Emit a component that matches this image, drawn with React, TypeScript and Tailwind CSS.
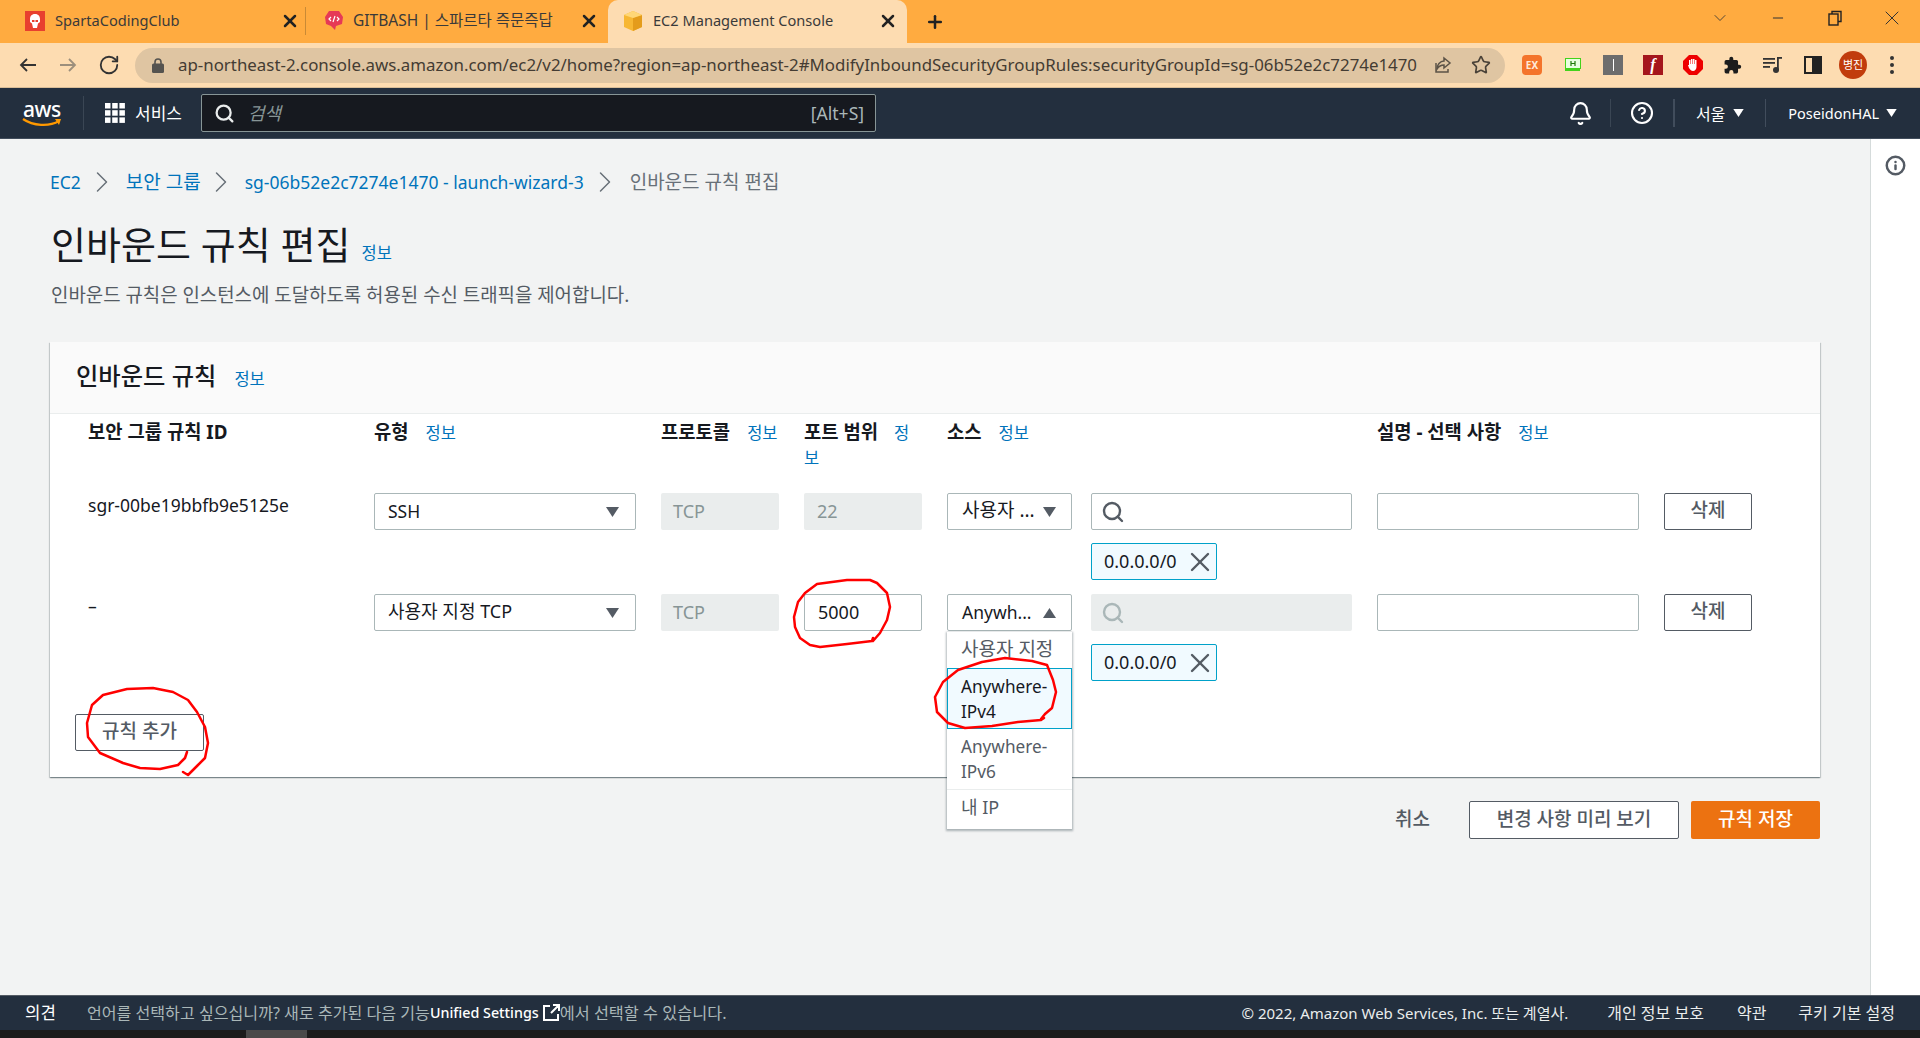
import React from "react";
import { RotateCw, Star, X, Search, Bell, CircleHelp, ChevronRight, ChevronDown, Minus, Plus, Info } from "lucide-react";

const Tri = ({ up = false, c = "#545b64", s = 10 }: { up?: boolean; c?: string; s?: number }) => (
  <svg width={s + 3} height={s} viewBox="0 0 13 10" className="shrink-0"><path d={up ? "M6.5 0 13 10H0z" : "M0 0h13L6.5 10z"} fill={c} /></svg>
);

const InfoLink = ({ className = "" }: { className?: string }) => (
  <a className={"text-[16.5px] font-normal text-[#0073bb] " + className}>정보</a>
);

const Box = ({ children, className = "" }: { children?: React.ReactNode; className?: string }) => (
  <div className={"h-[37px] flex items-center rounded-[2px] border border-[#aab7b8] bg-white text-[#16191f] " + className}>{children}</div>
);
const Disabled = ({ children, className = "" }: { children?: React.ReactNode; className?: string }) => (
  <div className={"h-[37px] flex items-center rounded-[2px] bg-[#eaeded] text-[#879596] text-[18px] " + className}>{children}</div>
);
const Token = () => (
  <div className="mt-[13px] w-[126px] h-[37px] flex items-center justify-between pl-[12px] rounded-[2px] border border-[#00a1c9] bg-[#f1faff] text-[#16191f] text-[18px]">
    <span>0.0.0.0/0</span>
    <X size={32} strokeWidth={1.8} color="#545b64" />
  </div>
);
const Del = () => (
  <button className="w-[88px] h-[37px] pb-[3px] rounded-[2px] border border-[#545b64] bg-white text-[#545b64] text-[19px] font-medium leading-[30px]">삭제</button>
);

const COLS = "grid grid-cols-[286px_287px_143px_143px_144px_286px_287px_88px]";

const Row = ({ id, type, port, source, second }: { id: string; type: React.ReactNode; port: React.ReactNode; source: React.ReactNode; second: boolean }) => (
  <div className={COLS + " h-[101px] text-[17.5px]"}>
    <div className="text-[#16191f] leading-[24px]">{id}</div>
    <div>
      <Box className="w-[262px] justify-between pl-[13px] pr-[16px]">{type}<Tri /></Box>
    </div>
    <div><Disabled className="w-[118px] pl-[12px]">TCP</Disabled></div>
    <div>{port}</div>
    <div>{source}</div>
    <div>
      {second ? (
        <Disabled className="w-[261px] pl-[10px]"><Search size={24} strokeWidth={2.4} color="#aab7b8" /></Disabled>
      ) : (
        <Box className="w-[261px] pl-[9px]"><Search size={24} strokeWidth={2.4} color="#545b64" /></Box>
      )}
      <Token />
    </div>
    <div><Box className="w-[262px]" /></div>
    <div><Del /></div>
  </div>
);

const TabClose = () => <X size={20} strokeWidth={3} color="#222" className="shrink-0" />;
const Crumb = ({ ml }: { ml: string }) => <ChevronRight size={36} strokeWidth={1} color="#687078" className={"shrink-0 " + ml} />;

export default function App() {
  return (
    <div className="relative w-[1920px] h-[1038px] overflow-hidden flex flex-col bg-[#f2f3f3]" style={{ fontFamily: '"Noto Sans","Noto Sans CJK KR",sans-serif' }}>
      {/* tab strip */}
      <div className="h-[43px] shrink-0 bg-[#ffab40] flex items-end text-[14.6px] text-[#3a3a3a]">
        <div className="w-[305px] h-[43px] flex items-center pl-[25px] pr-[5px] shrink-0 pb-[2px]">
          <svg width="20" height="20" viewBox="0 0 20 20" className="shrink-0"><rect width="20" height="20" fill="#e8402f" /><path d="M10 3C6.500 3 5 5.500 5 8v3l2 1.500 1 4.500h4l1-4.500 2-1.500V8c0-2.500-1.500-5-5-5z" fill="#fff" /><path d="M7 9h2.500v2H7zM10.500 9H13v2h-2.500z" fill="#e8402f" /></svg>
          <span className="ml-[10px] flex-1">SpartaCodingClub</span>
          <TabClose />
        </div>
        <div className="w-px h-[28px] mb-[8px] bg-[#c98a35] shrink-0" />
        <div className="w-[302px] h-[43px] flex items-center pl-[18px] pr-[9px] text-[15.5px] shrink-0 pb-[2px]">
          <svg width="20" height="21" viewBox="0 0 20 21" className="shrink-0"><path d="M5 1h10l4 6-1 7-6 2-1 4-4-4-5-2-1-7z" fill="#e63956" /><path d="M7 7 5 9l2 2M13 7l2 2-2 2M11 6 9 12" fill="none" stroke="#fff" strokeWidth="1.200" /></svg>
          <span className="ml-[9px] flex-1 whitespace-nowrap">GITBASH | 스파르타 즉문즉답</span>
          <TabClose />
        </div>
        <div className="w-[299px] h-[43px] rounded-t-[10px] bg-[#fddcb1] flex items-center pl-[15px] pr-[9px] shrink-0 pb-[2px]">
          <svg width="20" height="22" viewBox="0 0 20 22" className="shrink-0"><path d="M1 5l9-4 9 4v12l-9 4-9-4z" fill="#f7b733" /><path d="M10 8v13l9-4V5z" fill="#e49c1b" /><path d="M1 5l9 3 9-3-9-4z" fill="#ffd777" /></svg>
          <span className="ml-[10px] flex-1">EC2 Management Console</span>
          <TabClose />
        </div>
        <div className="ml-[18px] h-[43px] flex items-center shrink-0"><Plus size={20} strokeWidth={3} color="#222" /></div>
        <div className="ml-auto h-[36px] flex items-center mb-[7px] pr-[16px] text-[#333] shrink-0">
          <ChevronDown size={20} strokeWidth={1} />
          <Minus size={16} strokeWidth={1.5} className="ml-[40px]" />
          <svg width="16" height="16" viewBox="0 0 16 16" className="ml-[41px]" fill="none" stroke="#222" strokeWidth="1.400"><rect x="2" y="4" width="9" height="11" /><path d="M5 4V1.500h9v10h-3" /></svg>
          <X size={24} strokeWidth={1} className="ml-[37px]" />
        </div>
      </div>
      {/* toolbar */}
      <div className="h-[45px] shrink-0 bg-[#fddcb1] border-b border-[#d9bd97] flex items-center pl-[19px]">
        <svg width="17" height="14" viewBox="0 0 17 14" fill="none" stroke="#333" strokeWidth="1.800" className="shrink-0"><path d="M17 7H2M8 1 2 7l6 6" /></svg>
        <svg width="17" height="14" viewBox="0 0 17 14" fill="none" stroke="#9c8f7c" strokeWidth="1.800" className="ml-[24px] shrink-0"><path d="M0 7h15M9 1l6 6-6 6" /></svg>
        <RotateCw size={22} strokeWidth={2} color="#333" className="ml-[21px] shrink-0" />
        <div className="ml-[15px] w-[1370px] h-[35px] shrink-0 rounded-full bg-[#dfc5a2] flex items-center pl-[17px] pr-[14px] text-[16.87px] text-[#443c33]">
          <svg width="12" height="15" viewBox="0 0 12 15" className="shrink-0" fill="#55534f"><rect y="5.500" width="12" height="9.500" rx="1.500" /><path d="M3 6V4a3 3 0 0 1 6 0v2" fill="none" stroke="#55534f" strokeWidth="1.600" /></svg>
          <span className="ml-[14px] flex-1 min-w-0 whitespace-nowrap overflow-hidden">ap-northeast-2.console.aws.amazon.com/ec2/v2/home?region=ap-northeast-2#ModifyInboundSecurityGroupRules:securityGroupId=sg-06b52e2c7274e1470</span>
          <svg width="20" height="20" viewBox="0 0 20 20" fill="none" stroke="#5c5347" strokeWidth="1.500" className="shrink-0"><path d="M11 3l6 5-6 5v-3c-3 0-5 1-7 4 0-4 3-8 7-8z" /><path d="M3 8v9h12v-3" /></svg>
          <Star size={20} strokeWidth={2} color="#4a4238" className="ml-[18px] shrink-0" />
        </div>
        <div className="ml-[17px] w-[20px] h-[20px] shrink-0 rounded-[4px] bg-[#f4742b] text-[#ffe9d8] text-[10px] font-bold flex items-center justify-center">EX</div>
        <svg width="16" height="14" viewBox="0 0 16 14" className="ml-[23px] shrink-0"><rect x="0.500" y="0.500" width="15" height="10" fill="#e8ffe0" stroke="#43d11c" /><rect y="11" width="15" height="2" fill="#43d11c" /><path d="M6 3v5M10 3v5M6 5.500h4" stroke="#1f7a08" strokeWidth="1.200" /></svg>
        <div className="ml-[22px] w-[20px] h-[20px] shrink-0 bg-[#6d6d6d] flex items-center justify-center"><div className="w-px h-[12px] bg-white" /></div>
        <div className="ml-[20px] w-[20px] h-[20px] shrink-0 bg-[#a5161c] text-white italic font-bold text-[16px] leading-[20px] text-center" style={{ fontFamily: '"Liberation Serif",serif' }}>f</div>
        <svg width="22" height="22" viewBox="0 0 22 22" className="ml-[19px] shrink-0"><path d="M7 1h8l6 6v8l-6 6H7l-6-6V7z" fill="#ee0000" /><path d="M7 11V6h1.500v4h.5V5h1.500v5h.5V5H12.500v5h.5V6h1.500v7c0 2-1.500 4-3.500 4s-3-1.500-4-3L6 11z" fill="#fff" /></svg>
        <svg width="19" height="19" viewBox="0 0 24 24" className="ml-[19px] shrink-0" fill="#1c1c1c"><path d="M20.500 11H19V7a2 2 0 0 0-2-2h-4V3.500a2.500 2.500 0 0 0-5 0V5H4a2 2 0 0 0-2 2v3.800h1.500a2.700 2.700 0 0 1 0 5.400H2V20a2 2 0 0 0 2 2h3.800v-1.500a2.700 2.700 0 0 1 5.400 0V22H17a2 2 0 0 0 2-2v-4h1.500a2.500 2.500 0 0 0 0-5z" /></svg>
        <svg width="20" height="16" viewBox="0 0 20 16" className="ml-[21px] shrink-0" fill="#333"><rect y="1" width="12" height="1.800" /><rect y="5" width="12" height="1.800" /><rect y="9" width="7" height="1.800" /><rect x="14" y="0" width="1.800" height="13" /><circle cx="13" cy="13" r="3" /><rect x="14" y="0" width="5" height="1.800" /></svg>
        <div className="ml-[21px] w-[18px] h-[18px] shrink-0 border-[2px] border-[#222] flex justify-end"><div className="w-[8px] h-full bg-[#222]" /></div>
        <div className="ml-[17px] w-[28px] h-[28px] shrink-0 rounded-full bg-[#c13c0c] text-white text-[11px] flex items-center justify-center">병진</div>
        <div className="ml-[23px] flex flex-col gap-[3px] shrink-0"><span className="w-[4px] h-[4px] rounded-full bg-[#333]" /><span className="w-[4px] h-[4px] rounded-full bg-[#333]" /><span className="w-[4px] h-[4px] rounded-full bg-[#333]" /></div>
      </div>
      {/* aws nav */}
      <div className="h-[51px] shrink-0 bg-[#232f3e] border-b border-[#414d5c] flex items-center text-white text-[16px] pr-[23px]">
        <div className="w-[84px] shrink-0 pl-[22px] border-r border-[#3a4654] h-[34px] flex flex-col items-start justify-center">
          <span className="text-[21px] font-medium leading-[18px] tracking-[-0.5px] ml-[1px]">aws</span>
          <svg width="40" height="9" viewBox="0 0 40 9" className="shrink-0"><path d="M1 1c10 7 26 8 36 2" fill="none" stroke="#ff9900" strokeWidth="2.200" /><path d="M33 1l6 0-2 6z" fill="#ff9900" /></svg>
        </div>
        <svg width="20" height="20" viewBox="0 0 20 20" className="ml-[21px] shrink-0" fill="#fff">
          {[0, 7.2, 14.4].map((x) => [0, 7.2, 14.4].map((y) => <rect key={x + "-" + y} x={x} y={y} width="5.500" height="5.500" />))}
        </svg>
        <span className="ml-[10px] mt-[1px] text-[17px] shrink-0 w-[45px] whitespace-nowrap">서비스</span>
        <div className="ml-[21px] w-[675px] h-[38px] shrink-0 rounded-[2px] border border-[#879596] bg-[#16191f] flex items-center pl-[12px] pr-[11px]">
          <Search size={21} strokeWidth={2.6} color="#eaeded" />
          <span className="ml-[13px] italic text-[18px] text-[#879596]">검색</span>
          <span className="ml-auto text-[17.5px] text-[#aab7b8]">[Alt+S]</span>
        </div>
        <div className="ml-auto flex items-center shrink-0">
          <Bell size={25} strokeWidth={2} />
          <div className="w-px h-[28px] bg-[#3a4654] ml-[17px]" />
          <CircleHelp size={24} strokeWidth={2.1} className="ml-[19px]" />
          <div className="w-[2px] h-[28px] bg-[#414d5c] ml-[19px]" />
          <span className="ml-[21px] mt-[2px]">서울</span>
          <span className="ml-[8px] flex"><Tri c="#fff" s={8} /></span>
          <div className="w-px h-[28px] bg-[#414d5c] ml-[21px]" />
          <span className="ml-[22px] mt-[2px] text-[14.5px]">PoseidonHAL</span>
          <span className="ml-[7px] flex"><Tri c="#fff" s={8} /></span>
        </div>
      </div>
      {/* main */}
      <div className="flex-1 flex min-h-0">
        <div className="w-[1870px] shrink-0 pl-[50px] pr-[50px] pt-[31px] text-[#16191f]">
          <div className="h-[24px] flex items-center text-[17.5px]">
            <a className="text-[#0073bb]">EC2</a>
            <Crumb ml="ml-[3px]" />
            <a className="ml-[6px] text-[19px] text-[#0073bb]">보안 그룹</a>
            <Crumb ml="ml-[2px]" />
            <a className="ml-[6px] text-[#0073bb]">sg-06b52e2c7274e1470 - launch-wizard-3</a>
            <Crumb ml="ml-[3px]" />
            <span className="ml-[7px] text-[19px] text-[#687078]">인바운드 규칙 편집</span>
          </div>
          <div className="mt-[26px] flex items-end h-[48px] pl-[1px]">
            <h1 className="text-[38px] leading-[48px] font-normal text-[#16191f]">인바운드 규칙 편집</h1>
            <InfoLink className="ml-[11px] mb-[2px]" />
          </div>
          <p className="mt-[15px] pl-[1px] text-[18.9px] leading-[24px] text-[#545b64]">인바운드 규칙은 인스턴스에 도달하도록 허용된 수신 트래픽을 제어합니다.</p>
          {/* card */}
          <div className="mt-[35px] h-[435px] bg-white shadow-[0_1px_1px_0_rgba(0,28,36,0.3),1px_1px_1px_0_rgba(0,28,36,0.15),-1px_1px_1px_0_rgba(0,28,36,0.15)]">
            <div className="h-[72px] bg-[#fafafa] border-b border-[#eaeded] flex items-center pl-[26px]">
              <h2 className="text-[24.3px] font-medium text-[#16191f] mb-[2px]">인바운드 규칙</h2>
              <InfoLink className="ml-[18px] mt-[3px]" />
            </div>
            <div className="pl-[38px] text-[18.8px]">
              <div className={COLS + " h-[79px] pt-[6px] font-bold leading-[24px]"}>
                <div>보안 그룹 규칙 ID</div>
                <div>유형<InfoLink className="ml-[17px]" /></div>
                <div>프로토콜<InfoLink className="ml-[17px]" /></div>
                <div className="w-[118px]">포트 범위<InfoLink className="ml-[16px]" /></div>
                <div>소스<InfoLink className="ml-[17px]" /></div>
                <div />
                <div>설명 - 선택 사항<InfoLink className="ml-[17px]" /></div>
                <div />
              </div>
              <Row id="sgr-00be19bbfb9e5125e" type={<span>SSH</span>} second={false}
                port={<Disabled className="w-[118px] pl-[13px]">22</Disabled>}
                source={<Box className="w-[125px] justify-between pl-[14px] pr-[15px] text-[19px]"><span className="leading-[24px] mb-[3px] whitespace-nowrap">사용자 ...</span><Tri /></Box>} />
              <Row id="–" type={<span className="text-[18px] mb-[3px]">사용자 지정 TCP</span>} second
                port={<Box className="w-[118px] pl-[13px] text-[18px]">5000</Box>}
                source={<Box className="w-[125px] justify-between pl-[14px] pr-[15px] text-[17.5px]"><span>Anywh...</span><Tri up /></Box>} />
            </div>
            <button className="mt-[19px] ml-[25px] w-[129px] h-[37px] pb-[3px] rounded-[2px] border border-[#545b64] bg-white text-[#545b64] text-[19px] font-medium leading-[30px]">규칙 추가</button>
          </div>
          {/* actions */}
          <div className="mt-[24px] flex items-center justify-end text-[19px]">
            <span className="mr-[39px] mb-[1px] text-[#545b64] font-medium">취소</span>
            <button className="w-[210px] h-[38px] pb-[2px] rounded-[2px] border border-[#545b64] bg-white text-[#545b64] font-medium leading-[30px]">변경 사항 미리 보기</button>
            <button className="ml-[12px] w-[129px] h-[38px] pb-[2px] rounded-[2px] bg-[#ec7211] text-white font-medium leading-[30px]">규칙 저장</button>
          </div>
        </div>
        <div className="w-[50px] shrink-0 bg-white border-l border-[#d5dbdb] flex justify-center pt-[16px]">
          <Info size={21} strokeWidth={2.8} color="#545b64" />
        </div>
      </div>
      {/* footer */}
      <div className="h-[35px] shrink-0 bg-[#232f3e] border-t border-[#545b64] flex items-center text-[16px] text-[#eaeded] pl-[25px] pr-[25px] whitespace-nowrap">
        <span className="text-white text-[16.8px]">의견</span>
        <span className="ml-[31px] text-[#aab7b8] text-[16.1px]">언어를 선택하고 싶으십니까? 새로 추가된 다음 기능</span>
        <span className="text-white font-medium text-[14.3px]">Unified Settings</span>
        <svg width="18" height="18" viewBox="0 0 18 18" className="ml-[3px] shrink-0" fill="none" stroke="#fff" strokeWidth="2"><path d="M8 2H2v14h14v-6M9 9l7-7M11 1h6v6" /></svg>
        <span className="text-[#aab7b8] text-[16.3px]">에서 선택할 수 있습니다.</span>
        <span className="ml-auto text-[15px]">© 2022, Amazon Web Services, Inc. 또는 계열사.</span>
        <span className="ml-[39px]">개인 정보 보호</span>
        <span className="ml-[33px]">약관</span>
        <span className="ml-[32px]">쿠키 기본 설정</span>
      </div>
      <div className="h-[8px] shrink-0 bg-[#1c1c1c] flex"><div className="ml-[246px] w-[61px] h-full bg-[#4a4a4a]" /></div>

      {/* dropdown menu */}
      <div className="absolute left-[947px] top-[632px] w-[125px] h-[197px] bg-white shadow-[0_1px_2px_1px_rgba(0,28,36,0.3)] text-[17.2px] text-[#16191f] leading-[25px]">
        <div className="h-[36px] pl-[14px] pt-[5px] text-[19px] text-[#545b64] whitespace-nowrap">사용자 지정</div>
        <div className="h-[61px] pl-[13px] pt-[5px] border border-[#00a1c9] bg-[#f1faff]">Anywhere-<br />IPv4</div>
        <div className="h-[61px] pl-[14px] pt-[5px] border-b border-[#eaeded] text-[#545b64]">Anywhere-<br />IPv6</div>
        <div className="h-[39px] pl-[14px] pt-[5px] text-[18px] text-[#545b64]">내 IP</div>
      </div>
      {/* red ink annotations */}
      <svg className="absolute inset-0 pointer-events-none" width="1920" height="1038" viewBox="0 0 1920 1038" fill="none" stroke="#f00" strokeWidth="2.500" strokeLinejoin="round" strokeLinecap="round">
        <path d="M187 752 185 758 178 765 160 769 140 768 123 763 100 753 88 737 87 723 92 705 103 695 127 689 153 688 173 692 188 700 197 712 205 727 208 743 205 758 197 766 188 775 183 772" />
        <path d="M873 638 872 641 847 644 820 647 810 645 800 638 795 627 794 617 798 602 805 593 817 584 847 580 870 580 877 583 887 593 890 607 887 620 880 633 873 641" />
        <path d="M1041 719 1045 714 1052 708 1056 692 1053 680 1047 665 1032 661 1005 658 982 662 958 670 943 682 935 697 937 712 948 723 965 728 992 726 1018 722 1041 720 1044 718" />
      </svg>
    </div>
  );
}
